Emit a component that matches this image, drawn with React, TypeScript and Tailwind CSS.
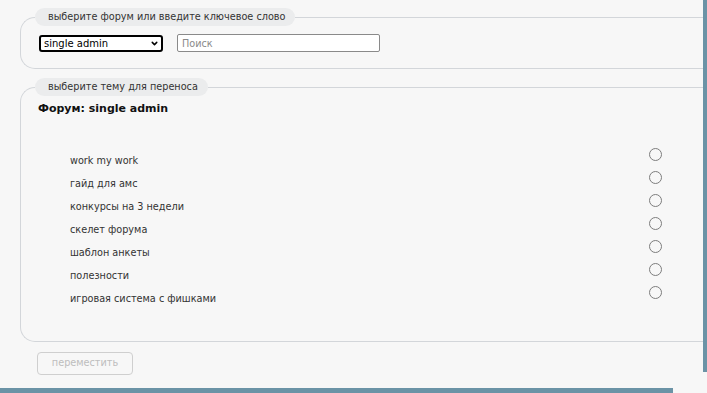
import { ChevronDown } from 'lucide-react'

const topics = [
  'work my work',
  'гайд для амс',
  'конкурсы на 3 недели',
  'скелет форума',
  'шаблон анкеты',
  'полезности',
  'игровая система с фишками',
]

const legendCls =
  'ml-0 pl-[13px] pr-[10px] h-[18px] leading-[18px] rounded-full bg-[#ebeced] text-[9.7px] text-[#333]'
const fieldsetCls =
  'border border-r-0 border-[#d3d6da] rounded-l-[15px] pl-[14px]'

export default function App() {
  return (
    <div
      className="w-[707px] h-[393px] bg-[#f7f7f7] flex flex-col overflow-hidden text-[#222]"
      style={{ fontFamily: '"DejaVu Sans", Verdana, sans-serif' }}
    >
      <div className="flex items-start h-[388px]">
        <div className="flex-1 pl-[20px] pt-[8px]">
          {/* forum picker */}
          <fieldset className={`${fieldsetCls} pt-[8px] pb-[16px]`}>
            <legend className={legendCls}>выберите форум или введите ключевое слово</legend>
            <div className="flex items-center gap-[14px] ml-[4px]">
              <div className="relative w-[124px] h-[17px]">
                <select className="block appearance-none w-full h-full border-2 border-black rounded-[3px] bg-white text-[10px] leading-[13px] pl-[3px] py-0 text-black outline-none">
                  <option>single admin</option>
                </select>
                <ChevronDown
                  className="absolute right-[4px] top-[4px] w-[9px] h-[9px] pointer-events-none text-black"
                  strokeWidth={4}
                />
              </div>
              <input
                type="text"
                placeholder="Поиск"
                className="block w-[203px] h-[18px] border border-[#8a8a8a] rounded-[2px] bg-white px-[4px] text-[9.7px] placeholder:text-[#8a8a8a] outline-none"
              />
            </div>
          </fieldset>

          {/* topic picker */}
          <fieldset className={`${fieldsetCls} mt-[9px] pt-[5px] pb-[33px]`}>
            <legend className={legendCls}>выберите тему для переноса</legend>
            <div className="ml-[3px] text-[11px] font-bold leading-[16px] text-[#111]">Форум: single admin</div>
            <ul className="mt-[30px] pl-[35px] pr-[41px]">
              {topics.map((t) => (
                <li key={t} className="flex items-start justify-between h-[23px]">
                  <span className="mt-[8px] text-[9.7px] leading-[12px] text-[#333]">{t}</span>
                  <span className="mt-[1px] w-[13px] h-[13px] rounded-full border border-[#7d7d7d] bg-[#f7f7f7]" />
                </li>
              ))}
            </ul>
          </fieldset>

          <button
            type="button"
            disabled
            className="mt-[10px] ml-[17px] w-[96px] h-[23px] border border-[#cfcfcf] rounded-[4px] text-[9.7px] text-[#bdbdbd] bg-[#f7f7f7]"
          >
            переместить
          </button>
        </div>
        <div className="w-[4px] h-[372px] bg-[#6b93a6]" />
      </div>
      <div className="w-[673px] h-[5px] bg-[#6b93a6]" />
    </div>
  )
}
